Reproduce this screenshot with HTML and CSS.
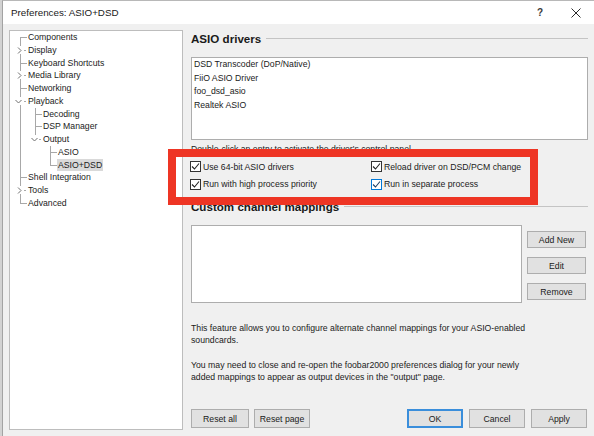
FILE: index.html
```html
<!DOCTYPE html>
<html>
<head>
<meta charset="utf-8">
<title>Preferences: ASIO+DSD</title>
<link rel="stylesheet" href="styles.css">
</head>
<body>
<div class="window">
  <div class="titlebar">
    <span class="title">Preferences: ASIO+DSD</span>
    <span class="help">?</span>
    <span class="close"><svg width="10" height="10" viewBox="0 0 10 10"><path d="M0.5 0.5L9.5 9.5M9.5 0.5L0.5 9.5" stroke="#2a2a2a" stroke-width="1" fill="none"/></svg></span>
  </div>
  <div class="client">
    <div class="tree">
      <div class="row"><span class="cell first"></span><span class="label">Components</span></div>
      <div class="row"><span class="cell exp"><svg class="chev-r" width="5" height="7" viewBox="0 0 5 7"><path d="M1 0.5L4 3.5L1 6.5" fill="none" stroke="#707070"/></svg></span><span class="label">Display</span></div>
      <div class="row"><span class="cell tee"></span><span class="label">Keyboard Shortcuts</span></div>
      <div class="row"><span class="cell exp"><svg class="chev-r" width="5" height="7" viewBox="0 0 5 7"><path d="M1 0.5L4 3.5L1 6.5" fill="none" stroke="#707070"/></svg></span><span class="label">Media Library</span></div>
      <div class="row"><span class="cell tee"></span><span class="label">Networking</span></div>
      <div class="row"><span class="cell exp"><svg class="chev-d" width="7" height="5" viewBox="0 0 7 5"><path d="M0.5 1L3.5 4L6.5 1" fill="none" stroke="#707070"/></svg></span><span class="label">Playback</span></div>
      <div class="row"><span class="cell pipe"></span><span class="cell tee"></span><span class="label">Decoding</span></div>
      <div class="row"><span class="cell pipe"></span><span class="cell tee"></span><span class="label">DSP Manager</span></div>
      <div class="row"><span class="cell pipe"></span><span class="cell exp-end"><svg class="chev-d" width="7" height="5" viewBox="0 0 7 5"><path d="M0.5 1L3.5 4L6.5 1" fill="none" stroke="#707070"/></svg></span><span class="label">Output</span></div>
      <div class="row"><span class="cell pipe"></span><span class="cell"></span><span class="cell first-tee"></span><span class="label">ASIO</span></div>
      <div class="row"><span class="cell pipe"></span><span class="cell"></span><span class="cell last"></span><span class="label sel">ASIO+DSD</span></div>
      <div class="row"><span class="cell tee"></span><span class="label">Shell Integration</span></div>
      <div class="row"><span class="cell exp"><svg class="chev-r" width="5" height="7" viewBox="0 0 5 7"><path d="M1 0.5L4 3.5L1 6.5" fill="none" stroke="#707070"/></svg></span><span class="label">Tools</span></div>
      <div class="row"><span class="cell last"></span><span class="label">Advanced</span></div>
    </div>

    <div class="page">
      <div class="ghead"><span class="gtitle">ASIO drivers</span><span class="grule"></span></div>
      <div class="list drivers">
        <div class="item">DSD Transcoder (DoP/Native)</div>
        <div class="item">FiiO ASIO Driver</div>
        <div class="item">foo_dsd_asio</div>
        <div class="item">Realtek ASIO</div>
      </div>
      <div class="hint">Double-click an entry to activate the driver's control panel.</div>
      <div class="checks">
        <div class="chk"><span class="box"><svg width="9" height="9" viewBox="0 0 9 9"><path d="M1 4.5L3.5 7L8 1.5" fill="none" stroke="#222" stroke-width="1.1"/></svg></span><span>Use 64-bit ASIO drivers</span></div>
        <div class="chk"><span class="box"><svg width="9" height="9" viewBox="0 0 9 9"><path d="M1 4.5L3.5 7L8 1.5" fill="none" stroke="#222" stroke-width="1.1"/></svg></span><span>Reload driver on DSD/PCM change</span></div>
        <div class="chk"><span class="box"><svg width="9" height="9" viewBox="0 0 9 9"><path d="M1 4.5L3.5 7L8 1.5" fill="none" stroke="#222" stroke-width="1.1"/></svg></span><span>Run with high process priority</span></div>
        <div class="chk"><span class="box focus"><svg width="9" height="9" viewBox="0 0 9 9"><path d="M1 4.5L3.5 7L8 1.5" fill="none" stroke="#1d3f66" stroke-width="1.1"/></svg></span><span>Run in separate process</span></div>
      </div>
      <div class="ghead g2"><span class="gtitle">Custom channel mappings</span><span class="grule"></span></div>
      <div class="maprow">
        <div class="list maps"></div>
        <div class="sidebtns">
          <div class="btn side">Add New</div>
          <div class="btn side">Edit</div>
          <div class="btn side">Remove</div>
        </div>
      </div>
      <p class="note n1">This feature allows you to configure alternate channel mappings for your ASIO-enabled<br>soundcards.</p>
      <p class="note n2">You may need to close and re-open the foobar2000 preferences dialog for your newly<br>added mappings to appear as output devices in the "output" page.</p>
      <div class="footer">
        <div class="btn b-resetall">Reset all</div>
        <div class="btn b-resetpage">Reset page</div>
        <div class="btn b-ok">OK</div>
        <div class="btn b-cancel">Cancel</div>
        <div class="btn b-apply">Apply</div>
      </div>
    </div>
  </div>
  <div class="annotation"></div>
</div>
</body>
</html>
```

FILE: styles.css
```css
* { box-sizing: border-box; margin: 0; padding: 0; }
html, body { width: 594px; height: 436px; overflow: hidden; }
body {
  background: #d2d2d2;
  font-family: "Liberation Sans", Arial, sans-serif;
  font-size: 8.7px;
  color: #1b1b1b;
}
.window {
  position: relative;
  margin-left: 2px;
  width: 592px;
  height: 436px;
  border-left: 1px solid #a3a3a3;
  border-top: 1px solid #b8b8b8;
  background: #f0f0f0;
  display: flex;
  flex-direction: column;
}
.titlebar {
  height: 23px;
  flex: none;
  background: #fff;
  display: flex;
  align-items: center;
  padding-right: 6px;
}
.title { padding-left: 8px; font-size: 9.8px; color: #1a1a1a; }
.help { margin-left: auto; margin-right: 14px; width: 20px; text-align: center; font-size: 10px; font-weight: bold; color: #3a3a3a; }
.close { width: 24px; display: flex; justify-content: center; }

.client { flex: 1; display: flex; padding: 6px 0 0 6px; }

/* tree */
.tree {
  --ln: #a8a8a8;
  width: 174px;
  height: 400px;
  flex: none;
  background: #fff;
  border: 1px solid #bdbdbd;
  padding-left: 2px;
}
.row { display: flex; height: 12.75px; }
.cell {
  width: 15px;
  flex: none;
  display: flex;
  align-items: center;
  background-repeat: no-repeat;
}
.pipe {
  background-image: linear-gradient(var(--ln), var(--ln));
  background-size: 1px 100%;
  background-position: 8px 0;
}
.tee {
  background-image: linear-gradient(var(--ln), var(--ln)), linear-gradient(var(--ln), var(--ln));
  background-size: 1px 100%, 6px 1px;
  background-position: 8px 0, 9px 6px;
}
.first {
  background-image: linear-gradient(var(--ln), var(--ln)), linear-gradient(var(--ln), var(--ln));
  background-size: 1px 100%, 6px 1px;
  background-position: 8px 6px, 9px 6px;
}
.first-tee {
  background-image: linear-gradient(var(--ln), var(--ln)), linear-gradient(var(--ln), var(--ln));
  background-size: 1px 100%, 6px 1px;
  background-position: 8px 0, 9px 6px;
}
.last {
  background-image: linear-gradient(var(--ln), var(--ln)), linear-gradient(var(--ln), var(--ln));
  background-size: 1px 7px, 6px 1px;
  background-position: 8px 0, 9px 6px;
}
.exp {
  background-image: linear-gradient(var(--ln), var(--ln)), linear-gradient(var(--ln), var(--ln)), linear-gradient(var(--ln), var(--ln));
  background-size: 1px 2px, 1px 3px, 2px 1px;
  background-position: 8px 0, 8px 10px, 12px 6px;
}
.exp-end {
  background-image: linear-gradient(var(--ln), var(--ln)), linear-gradient(var(--ln), var(--ln));
  background-size: 1px 2px, 2px 1px;
  background-position: 8px 0, 12px 6px;
}
.chev-r { margin-left: 5px; }
.chev-d { margin-left: 4px; }
.exp .chev-d { margin-left: 3px; }
.label { padding: 0 1px; line-height: 12.75px; white-space: nowrap; color: #1b1b1b; }
.label.sel { background: #d9d9d9; }

/* page */
.page { margin-left: 8px; width: 397px; flex: none; display: flex; flex-direction: column; }
.ghead { height: 17px; display: flex; align-items: center; flex: none; }
.gtitle { font-size: 11.6px; font-weight: bold; line-height: 17px; color: #1a1a1a; white-space: nowrap; }
.grule { flex: 1; height: 1px; background: #c4c4c4; margin-left: 5px; }
.list { background: #fff; border: 1px solid #adadad; flex: none; }
.drivers { margin-top: 10px; height: 83px; padding-left: 2px; }
.item { line-height: 13.6px; white-space: nowrap; }
.hint { margin-top: 2.5px; line-height: 12px; white-space: nowrap; }
.checks {
  margin-top: 3.5px;
  margin-left: -1px;
  display: grid;
  grid-template-columns: 181px 1fr;
  grid-auto-rows: 17.5px;
}
.chk { display: flex; align-items: center; white-space: nowrap; }
.box {
  width: 11px; height: 11px;
  border: 1px solid #333;
  background: #fff;
  margin-right: 2px;
  display: flex; align-items: center; justify-content: center;
  flex: none;
}
.box.focus { border-color: #0078d7; }
.g2 { margin-top: 4.5px; }
.maprow { margin-top: 10.5px; display: flex; flex: none; }
.maps { width: 331px; height: 78px; }
.sidebtns { margin-left: 5px; display: flex; flex-direction: column; }
.btn {
  background: #e1e1e1;
  border: 1px solid #adadad;
  display: flex; align-items: center; justify-content: center;
  white-space: nowrap;
  color: #1b1b1b;
}
.side { width: 59px; height: 17px; margin-top: 9px; }
.side:first-child { margin-top: 6px; }
.note { line-height: 12.2px; white-space: nowrap; }
.n1 { margin-top: 19px; }
.n2 { margin-top: 12.6px; }
.footer { margin-top: 25.6px; display: flex; height: 19px; margin-right: 1px; }
.footer .btn { height: 19px; }
.b-resetall { width: 58px; }
.b-resetpage { width: 56px; margin-left: 5px; }
.b-ok { width: 56px; margin-left: auto; border: 2px solid #3a8edb; }
.b-cancel { width: 56px; margin-left: 6px; }
.b-apply { width: 56px; margin-left: 6px; }

/* red annotation overlay */
.annotation {
  position: absolute;
  left: 165px;
  top: 148px;
  width: 370px;
  height: 56px;
  border: 8px solid #ee3524;
}
```
